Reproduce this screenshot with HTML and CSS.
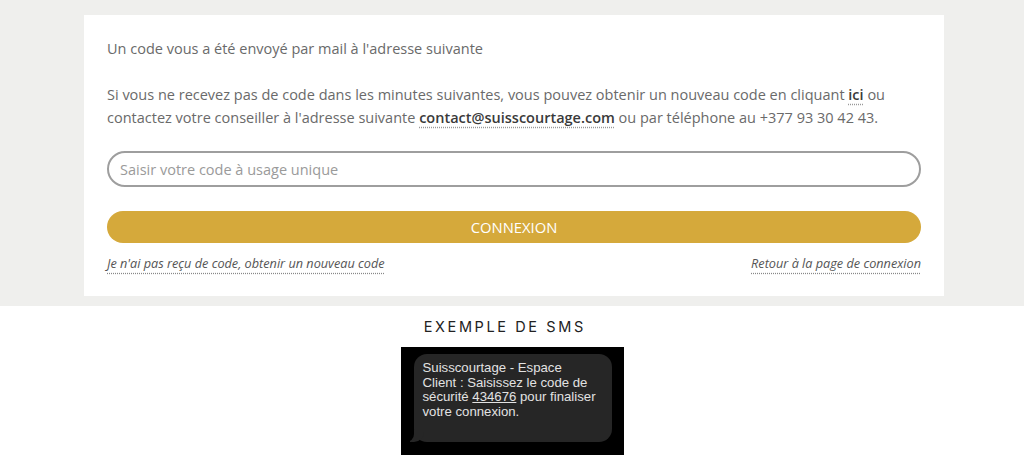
FILE: index.html
```html
<!DOCTYPE html>
<html lang="fr">
<head>
<meta charset="utf-8">
<title>Code de sécurité</title>
<link rel="stylesheet" href="styles.css">
</head>
<body>
<section class="top">
  <div class="card">
    <p class="intro">Un code vous a été envoyé par mail à l'adresse suivante</p>
    <p class="info">Si vous ne recevez pas de code dans les minutes suivantes, vous pouvez obtenir un nouveau code en cliquant <a class="link" href="#">ici</a> ou<br>contactez votre conseiller à l'adresse suivante <a class="link" href="#">contact@suisscourtage.com</a> ou par téléphone au +377 93 30 42 43.</p>
    <input class="code" type="text" placeholder="Saisir votre code à usage unique">
    <button class="submit" type="button">CONNEXION</button>
    <div class="links">
      <a class="small-link" href="#">Je n'ai pas reçu de code, obtenir un nouveau code</a>
      <a class="small-link" href="#">Retour à la page de connexion</a>
    </div>
  </div>
</section>
<section class="example">
  <h2 class="example-title">EXEMPLE DE SMS</h2>
  <div class="phone">
    <div class="bubble">Suisscourtage - Espace<br>Client : Saisissez le code de<br>sécurité <span class="num">434676</span> pour finaliser<br>votre connexion.</div>
  </div>
</section>
</body>
</html>
```
FILE: styles.css
```css
* { box-sizing: border-box; }
html, body { margin: 0; padding: 0; background: #fff; }
body { font-family: "Open Sans", "Liberation Sans", sans-serif; }

.top {
  background: #efefed;
  padding: 15px 80px 10px 84px;
}
.card {
  background: #fff;
  padding: 22px 23px 24px 23px;
  display: flex;
  flex-direction: column;
}
.intro, .info {
  margin: 0;
  font-size: 14.5px;
  font-weight: 400;
  line-height: 23px;
  color: #6a6a6a;
}
.intro { margin-bottom: 23px; }
.link {
  color: #3a3a3a;
  font-weight: 600;
  text-decoration: underline dotted #999;
  text-underline-offset: 4px;
}
.code {
  margin-top: 22px;
  height: 36px;
  border: 2px solid #9e9e9e;
  border-radius: 18px;
  padding: 0 11px;
  font-family: "Open Sans", "Liberation Sans", sans-serif;
  font-size: 14.5px;
  color: #333;
  outline: none;
}
.code::placeholder { color: #9a9a9a; }
.submit {
  margin-top: 24px;
  height: 32px;
  border: none;
  border-radius: 16px;
  background: #d5a93b;
  color: #fff;
  font-family: "Open Sans", "Liberation Sans", sans-serif;
  font-size: 14.8px;
  padding: 0;
}
.links {
  margin-top: 11px;
  display: flex;
  justify-content: space-between;
  line-height: 18px;
}
.small-link {
  font-size: 12.7px;
  font-style: italic;
  color: #555;
  text-decoration: underline dotted #888;
  text-underline-offset: 5px;
}

.example {
  display: flex;
  flex-direction: column;
  align-items: center;
}
.example-title {
  margin: 11px 17px 10px 0;
  padding-left: 2.6px;
  font-family: "Inter", "Liberation Sans", sans-serif;
  font-weight: 400;
  font-size: 14.5px;
  line-height: 20px;
  letter-spacing: 2.6px;
  color: #222;
}
.phone {
  width: 223px;
  height: 108px;
  background: #000;
  padding: 7px 12px 0 13px;
}
.bubble {
  position: relative;
  background: #262626;
  border-radius: 13px;
  height: 88px;
  padding: 7px 6px 0 9px;
  font-family: "Liberation Sans", "Helvetica", sans-serif;
  font-size: 13.2px;
  line-height: 14.6px;
  color: #e2e2e2;
  white-space: nowrap;
}
.bubble::before {
  content: "";
  position: absolute;
  left: -4px;
  bottom: 0;
  width: 14px;
  height: 12px;
  background: #262626;
  border-bottom-right-radius: 10px;
}
.bubble::after {
  content: "";
  position: absolute;
  left: -10px;
  bottom: 0;
  width: 10px;
  height: 14px;
  background: #000;
  border-bottom-right-radius: 8px;
}
.num { text-decoration: underline; }
```
